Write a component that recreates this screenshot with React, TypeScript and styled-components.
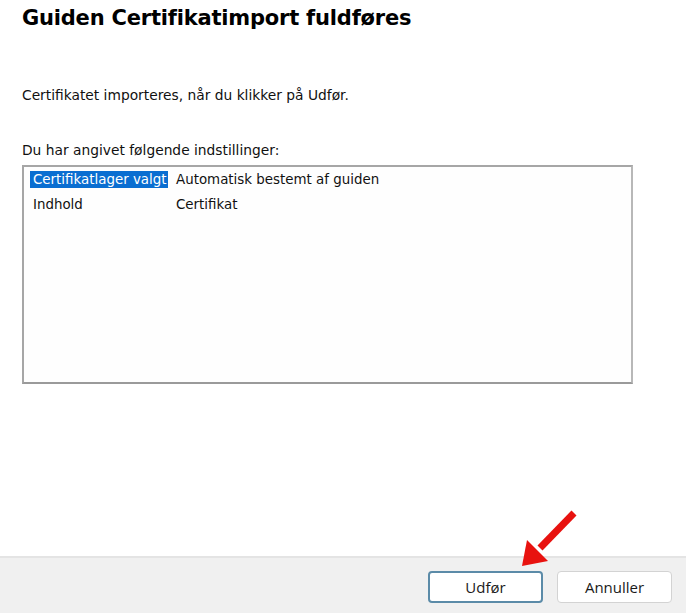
import React from "react";
import styled, { createGlobalStyle } from "styled-components";

interface Setting {
  label: string;
  value: string;
  selected?: boolean;
}

const settings: Setting[] = [
  { label: "Certifikatlager valgt", value: "Automatisk bestemt af guiden", selected: true },
  { label: "Indhold", value: "Certifikat" },
];

const GlobalStyle = createGlobalStyle`
  html, body {
    margin: 0;
    padding: 0;
    background: #ffffff;
  }
  body {
    font-family: "DejaVu Sans", sans-serif;
    color: #000000;
  }
`;

const Wizard = styled.div`
  position: relative;
  width: 686px;
  height: 613px;
  display: flex;
  flex-direction: column;
  overflow: hidden;
`;

const Body = styled.div`
  flex: 1;
  padding: 5px 53px 0 22px;
  display: flex;
  flex-direction: column;
`;

const Title = styled.h1`
  margin: 0;
  font-family: "DejaVu Sans", sans-serif;
  font-weight: bold;
  font-size: 21px;
  line-height: 26px;
  letter-spacing: -0.2px;
`;

const Text = styled.p<{ $top: number }>`
  margin: ${(p) => p.$top}px 0 0 0;
  font-size: 13.8px;
  line-height: 16px;
  color: #111;
`;

const ListBox = styled.div`
  margin-top: 7px;
  height: 219px;
  box-sizing: border-box;
  border: 2px solid #a6a6a6;
  border-right-color: #b8b8b8;
  border-bottom-color: #9a9a9a;
  padding: 4px 6px;
  background: #fefefe;
`;

const Row = styled.div`
  display: flex;
  align-items: flex-start;
  height: 25px;
  font-size: 13.4px;
  line-height: 17px;
  color: #111;
`;

const Label = styled.span<{ $selected?: boolean }>`
  width: 146px;
  flex-shrink: 0;
  padding-left: ${(p) => (p.$selected ? "0" : "3px")};
  box-sizing: border-box;
  span {
    display: inline-block;
    white-space: nowrap;
    padding: 0 1px 0 ${(p) => (p.$selected ? "3px" : "0")};
    background: ${(p) => (p.$selected ? "#0a6ed1" : "transparent")};
    color: ${(p) => (p.$selected ? "#ffffff" : "#111")};
  }
`;

const Value = styled.span`
  white-space: nowrap;
`;

const Footer = styled.div`
  height: 57px;
  background: #f0f0f0;
  border-top: 2px solid #e4e4e4;
  display: flex;
  justify-content: flex-end;
  align-items: flex-start;
  gap: 14px;
  padding: 13px 14px 0 0;
  box-sizing: border-box;
`;

const Button = styled.button<{ $primary?: boolean }>`
  width: 115px;
  height: 32px;
  border-radius: 4px;
  background: #ffffff;
  border: ${(p) => (p.$primary ? "2px solid #5b8ba8" : "1px solid #d3d3d3")};
  font-family: "Open Sans", "Noto Sans", sans-serif;
  font-size: 15px;
  color: #1a1a1a;
  cursor: pointer;
  padding: 0;
`;

const Arrow = styled.svg`
  position: absolute;
  left: 510px;
  top: 505px;
  width: 75px;
  height: 70px;
  pointer-events: none;
`;

export default function App() {
  return (
    <Wizard>
      <GlobalStyle />
      <Body>
        <Title>Guiden Certifikatimport fuldføres</Title>
        <Text $top={56}>Certifikatet importeres, når du klikker på Udfør.</Text>
        <Text $top={39}>Du har angivet følgende indstillinger:</Text>
        <ListBox>
          {settings.map((s) => (
            <Row key={s.label}>
              <Label $selected={s.selected}>
                <span>{s.label}</span>
              </Label>
              <Value>{s.value}</Value>
            </Row>
          ))}
        </ListBox>
      </Body>
      <Footer>
        <Button $primary>Udfør</Button>
        <Button>Annuller</Button>
      </Footer>
      <Arrow viewBox="0 0 75 70">
        <line x1="64" y1="8" x2="30" y2="43" stroke="#e8120f" strokeWidth="7" />
        <polygon points="12,61 38,56 17,35" fill="#e8120f" />
      </Arrow>
    </Wizard>
  );
}
